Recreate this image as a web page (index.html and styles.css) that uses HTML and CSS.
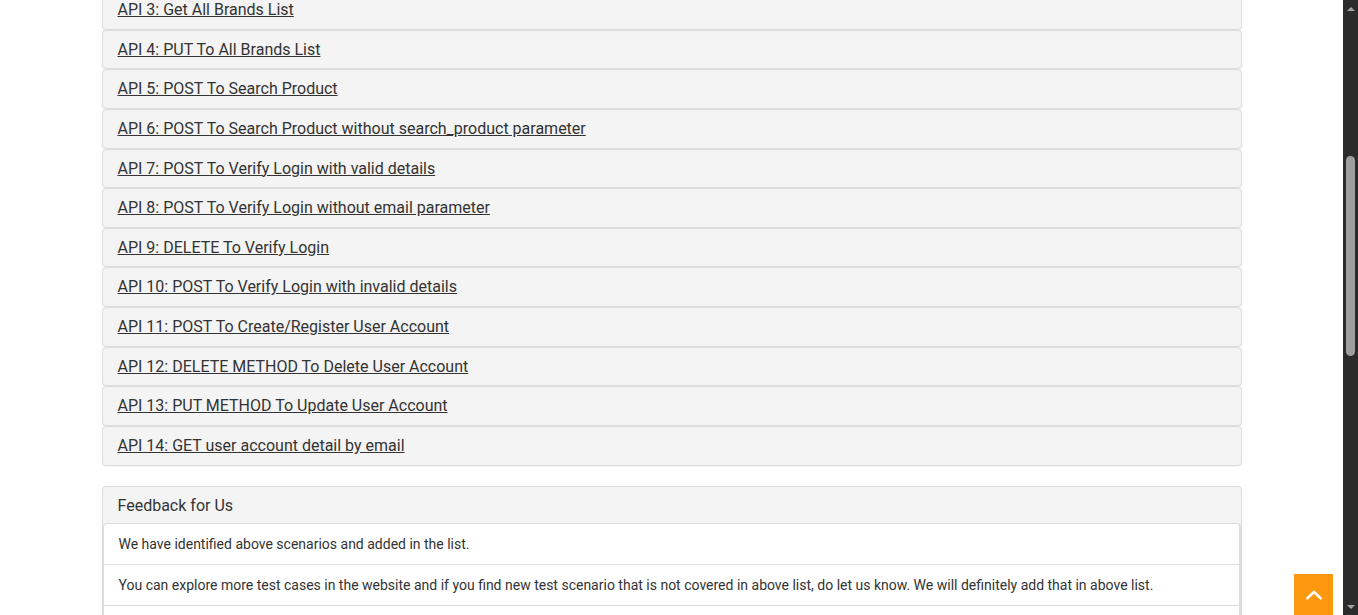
FILE: index.html
```html
<!DOCTYPE html>
<html>
<head>
<meta charset="utf-8">
<link rel="stylesheet" href="styles.css">
</head>
<body>
<div class="page">
  <div class="container">
    <div class="api-list">
      <div class="panel"><div class="panel-heading"><a href="#">API 3: Get All Brands List</a></div></div>
      <div class="panel"><div class="panel-heading"><a href="#">API 4: PUT To All Brands List</a></div></div>
      <div class="panel"><div class="panel-heading"><a href="#">API 5: POST To Search Product</a></div></div>
      <div class="panel"><div class="panel-heading"><a href="#">API 6: POST To Search Product without search_product parameter</a></div></div>
      <div class="panel"><div class="panel-heading"><a href="#">API 7: POST To Verify Login with valid details</a></div></div>
      <div class="panel"><div class="panel-heading"><a href="#">API 8: POST To Verify Login without email parameter</a></div></div>
      <div class="panel"><div class="panel-heading"><a href="#">API 9: DELETE To Verify Login</a></div></div>
      <div class="panel"><div class="panel-heading"><a href="#">API 10: POST To Verify Login with invalid details</a></div></div>
      <div class="panel"><div class="panel-heading"><a href="#">API 11: POST To Create/Register User Account</a></div></div>
      <div class="panel"><div class="panel-heading"><a href="#">API 12: DELETE METHOD To Delete User Account</a></div></div>
      <div class="panel"><div class="panel-heading"><a href="#">API 13: PUT METHOD To Update User Account</a></div></div>
      <div class="panel"><div class="panel-heading"><a href="#">API 14: GET user account detail by email</a></div></div>
    </div>
    <div class="panel feedback">
      <div class="feedback-heading">Feedback for Us</div>
      <ul class="list-group">
        <li class="list-item">We have identified above scenarios and added in the list.</li>
        <li class="list-item">You can explore more test cases in the website and if you find new test scenario that is not covered in above list, do let us know. We will definitely add that in above list.</li>
        <li class="list-item list-item-empty"></li>
      </ul>
    </div>
  </div>
</div>
<a class="scroll-up" href="#"><svg width="20" height="12" viewBox="0 0 20 12"><path d="M2.5 10 L10 3 L17.5 10" fill="none" stroke="#fff" stroke-width="2.4"/></svg></a>
<div class="scrollbar">
  <div class="sb-arrow sb-up"></div>
  <div class="sb-track"><div class="sb-thumb"></div></div>
  <div class="sb-arrow sb-down"></div>
</div>
</body>
</html>
```

FILE: styles.css
```css
html, body {
  margin: 0;
  padding: 0;
  height: 615px;
  overflow: hidden;
  background: #fff;
  font-family: Roboto, "Liberation Sans", sans-serif;
  color: #333;
}
.page {
  width: 1343px;
  height: 615px;
  overflow: hidden;
}
.container {
  width: 1140px;
  margin: -10px auto 0;
  padding: 0 15px;
}
.api-list {
  display: flex;
  flex-direction: column;
}
.panel {
  border: 1px solid #ddd;
  border-radius: 4px;
  background: #f4f4f4;
  box-shadow: 0 1px 1px rgba(0,0,0,0.05);
}
.panel-heading {
  padding: 10px 15px;
  font-size: 16px;
  line-height: 17.64px;
}
.panel-heading a {
  color: #333;
  text-decoration: underline;
}
.feedback {
  margin-top: 20px;
  background: #f4f4f4;
}
.feedback-heading {
  padding: 9px 15px 8px;
  font-size: 16px;
  line-height: 19px;
  color: #333;
}
.list-group {
  list-style: none;
  margin: 0;
  padding: 0;
  background: #fff;
  border: 1px solid #ddd;
  border-right-width: 2px;
  border-bottom: none;
  border-radius: 4px 4px 0 0;
}
.list-item {
  padding: 10px 15px;
  font-size: 14px;
  line-height: 20px;
  border-bottom: 1px solid #ddd;
  color: #333;
}
.list-item-empty {
  height: 20px;
}
.scroll-up {
  position: fixed;
  left: 1294px;
  top: 574px;
  width: 39px;
  height: 42px;
  background: #fe980f;
  display: flex;
  align-items: center;
  justify-content: center;
}
.scroll-up svg {
  display: block;
  margin-top: -1px;
}
.scrollbar {
  position: fixed;
  top: 0;
  right: 0;
  width: 15px;
  height: 615px;
  background: #2b2b2b;
  display: flex;
  flex-direction: column;
}
.sb-arrow {
  height: 17px;
  flex: none;
  display: flex;
  align-items: center;
  justify-content: center;
}
.sb-up::before {
  content: "";
  border-left: 4px solid transparent;
  border-right: 4px solid transparent;
  border-bottom: 4px solid #a3a3a3;
}
.sb-down::before {
  content: "";
  border-left: 4px solid transparent;
  border-right: 4px solid transparent;
  border-top: 4px solid #a3a3a3;
}
.sb-track {
  flex: 1;
  position: relative;
}
.sb-thumb {
  position: absolute;
  left: 3px;
  width: 9px;
  top: 139px;
  height: 200px;
  border-radius: 5px;
  background: #9f9f9f;
}
```
